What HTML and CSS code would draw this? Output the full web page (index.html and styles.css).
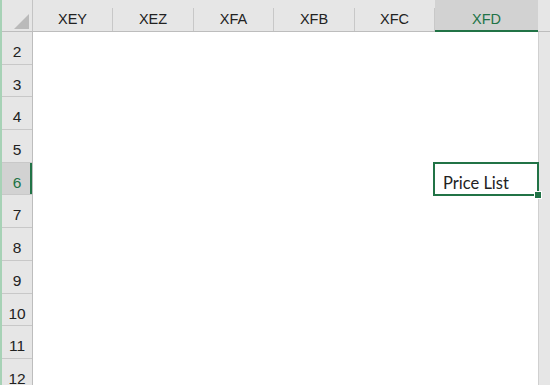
FILE: index.html
```html
<!DOCTYPE html>
<html lang="en">
<head>
    <meta charset="UTF-8">
    <meta name="viewport" content="width=device-width, initial-scale=1.0">
    <title>Price List</title>
    <link rel="stylesheet" href="styles.css">
</head>
<body>

    <div class="sheet">
        <div class="col-heads">
            <div class="corner">
                <div class="corner-mark"></div>
            </div>
            <div class="col-head w80">XEY</div>
            <div class="col-head w81">XEZ</div>
            <div class="col-head w80">XFA</div>
            <div class="col-head w81">XFB</div>
            <div class="col-head w80">XFC</div>
            <div class="col-head wlast selected">XFD</div>
            <div class="strip-top"></div>
        </div>

        <div class="grid-body">
            <div class="row-heads">
                <div class="row-head">2</div>
                <div class="row-head">3</div>
                <div class="row-head">4</div>
                <div class="row-head">5</div>
                <div class="row-head selected">6</div>
                <div class="row-head">7</div>
                <div class="row-head">8</div>
                <div class="row-head">9</div>
                <div class="row-head">10</div>
                <div class="row-head">11</div>
                <div class="row-head">12</div>
            </div>

            <div class="cells">
                <div class="active-cell">
                    Price List
                    <span class="fill-handle"></span>
                </div>
            </div>

            <div class="vstrip"></div>
        </div>
    </div>

</body>
</html>
```

FILE: styles.css
```css
body {
    margin: 0;
    padding: 0;
    background-color: #ffffff;
    overflow: hidden;
    font-family: 'Liberation Sans', Arial, sans-serif;
}

.sheet {
    width: 550px;
    height: 385px;
    border-left: 2px solid #a7d2b6;
    box-sizing: border-box;
    display: flex;
    flex-direction: column;
}

/* column headers */
.col-heads {
    display: flex;
    height: 32px;
    flex-shrink: 0;
    background-color: #e6e6e6;
    border-bottom: 1px solid #bdbdbd;
    box-sizing: border-box;
}

.corner {
    width: 31px;
    height: 31px;
    flex-shrink: 0;
    border-right: 1px solid #c4c4c4;
    box-sizing: border-box;
    padding: 14px 2px 0 12px;
}

.corner-mark {
    width: 0;
    height: 0;
    border-left: 15px solid transparent;
    border-bottom: 15px solid #bababa;
}

.col-head {
    flex-shrink: 0;
    margin-top: 8px;
    height: 23px;
    line-height: 23px;
    text-align: center;
    font-size: 14.5px;
    color: #222222;
    border-right: 1px solid #c8c8c8;
    box-sizing: border-box;
}

.w80 { width: 80px; }
.w81 { width: 81px; }
.wlast { width: 103px; }

.col-head.selected {
    margin-top: 0;
    height: 32px;
    padding-top: 8px;
    line-height: 22px;
    background-color: #d2d2d2;
    color: #217346;
    border-right: none;
    border-bottom: 2px solid #217346;
}

.strip-top {
    flex: 1;
    background-color: #e6e6e6;
}

/* body */
.grid-body {
    flex: 1;
    display: flex;
    min-height: 0;
}

.row-heads {
    width: 31px;
    flex-shrink: 0;
    background-color: #e6e6e6;
    border-right: 1px solid #bdbdbd;
    box-sizing: border-box;
}

.row-head {
    height: 32.7px;
    box-sizing: border-box;
    padding-top: 9px;
    line-height: 22px;
    text-align: center;
    font-size: 15.5px;
    color: #222222;
    border-bottom: 1px solid #c8c8c8;
}

.row-head.selected {
    background-color: #d2d2d2;
    color: #217346;
    box-shadow: inset -2px 0 0 #217346;
}

.cells {
    width: 505px;
    flex-shrink: 0;
    display: grid;
    grid-template-columns: 80px 81px 80px 81px 80px 103px;
    grid-template-rows: repeat(11, 32.7px);
}

.active-cell {
    grid-column: 6;
    grid-row: 5;
    position: relative;
    margin: -1px -1px -1px -2px;
    border: 2px solid #217346;
    padding: 8px 0 0 8px;
    font-family: 'Lato', 'Liberation Sans', sans-serif;
    font-size: 16.5px;
    line-height: 22px;
    color: #222222;
}

.fill-handle {
    position: absolute;
    right: -5px;
    bottom: -5px;
    width: 6px;
    height: 6px;
    background-color: #217346;
    border: 1px solid #ffffff;
}

.vstrip {
    flex: 1;
    background-color: #e6e6e6;
    border-left: 1px solid #d0d0d0;
}
```
